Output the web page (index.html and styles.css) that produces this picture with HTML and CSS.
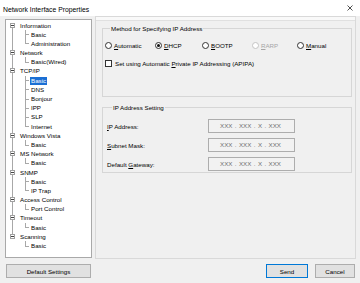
FILE: index.html
```html
<!DOCTYPE html>
<html lang="en">
<head>
    <meta charset="UTF-8">
    <title>Network Interface Properties</title>
    <link rel="stylesheet" href="styles.css">
</head>
<body>
    <div class="titlebar">
        <span class="title">Network Interface Properties</span>
        <svg class="close" width="6" height="6" viewBox="0 0 6 6"><path d="M0.5 0.5L5.5 5.5M5.5 0.5L0.5 5.5" stroke="#222" stroke-width="0.8"/></svg>
    </div>

    <div class="main">
        <ul class="tree">
            <li class="node">
                <div class="row"><span class="exp"></span>Information</div>
                <ul class="kids"><li>Basic</li><li>Administration</li></ul>
            </li>
            <li class="node">
                <div class="row"><span class="exp"></span>Network</div>
                <ul class="kids"><li>Basic(Wired)</li></ul>
            </li>
            <li class="node">
                <div class="row"><span class="exp"></span>TCP/IP</div>
                <ul class="kids">
                    <li class="sel"><span>Basic</span></li>
                    <li>DNS</li>
                    <li>Bonjour</li>
                    <li>IPP</li>
                    <li>SLP</li>
                    <li>Internet</li>
                </ul>
            </li>
            <li class="node">
                <div class="row"><span class="exp"></span>Windows Vista</div>
                <ul class="kids"><li>Basic</li></ul>
            </li>
            <li class="node">
                <div class="row"><span class="exp"></span>MS Network</div>
                <ul class="kids"><li>Basic</li></ul>
            </li>
            <li class="node">
                <div class="row"><span class="exp"></span>SNMP</div>
                <ul class="kids"><li>Basic</li><li>IP Trap</li></ul>
            </li>
            <li class="node">
                <div class="row"><span class="exp"></span>Access Control</div>
                <ul class="kids"><li>Port Control</li></ul>
            </li>
            <li class="node">
                <div class="row"><span class="exp"></span>Timeout</div>
                <ul class="kids"><li>Basic</li></ul>
            </li>
            <li class="node">
                <div class="row"><span class="exp"></span>Scanning</div>
                <ul class="kids"><li>Basic</li></ul>
            </li>
        </ul>

        <div class="panel">
            <fieldset class="group method">
                <legend>Method for Specifying IP Address</legend>
                <div class="radios">
                    <label class="opt"><span class="radio"></span><u>A</u>utomatic</label>
                    <label class="opt"><span class="radio on"></span><u>D</u>HCP</label>
                    <label class="opt"><span class="radio"></span><u>B</u>OOTP</label>
                    <label class="opt off"><span class="radio"></span><u>R</u>ARP</label>
                    <label class="opt"><span class="radio"></span><u>M</u>anual</label>
                </div>
                <label class="check"><span class="box"></span>Set using Automatic&nbsp;<u>P</u>rivate IP Addressing (APIPA)</label>
            </fieldset>

            <fieldset class="group ipset">
                <legend>IP Address Setting</legend>
                <div class="fields">
                    <span class="flabel"><u>I</u>P Address:</span>
                    <span class="ipbox">XXX . XXX . X . XXX</span>
                    <span class="flabel"><u>S</u>ubnet Mask:</span>
                    <span class="ipbox">XXX . XXX . X . XXX</span>
                    <span class="flabel">Default <u>G</u>ateway:</span>
                    <span class="ipbox">XXX . XXX . X . XXX</span>
                </div>
            </fieldset>
        </div>
    </div>

    <div class="footer">
        <button class="btn wide">Default Settings</button>
        <div class="actions">
            <button class="btn primary">Send</button>
            <button class="btn">Cancel</button>
        </div>
    </div>
</body>
</html>
```

FILE: styles.css
```css
body {
    margin: 0;
    width: 360px;
    height: 283px;
    overflow: hidden;
    background: #f0f0f0;
    font-family: "Liberation Sans", Arial, sans-serif;
    font-size: 6.2px;
    color: #000;
}

.titlebar {
    height: 16px;
    box-sizing: border-box;
    padding: 0 7px 0 3px;
    background: #fff;
    display: flex;
    align-items: center;
    justify-content: space-between;
}

.title {
    font-size: 6.8px;
    margin-top: 2px;
}

.close {
    margin-top: -1px;
}

.main {
    display: flex;
    align-items: flex-start;
    gap: 3px;
    padding-left: 5px;
    height: 243px;
}

/* tree view */
.tree {
    margin: 3px 0 0;
    padding: 0.5px 0 0;
    list-style: none;
    width: 87px;
    height: 239px;
    box-sizing: border-box;
    border: 1px solid #a9a9a9;
    background: #fff;
}

.node {
    position: relative;
}

.node::before {
    content: "";
    position: absolute;
    left: 6px;
    top: 0;
    bottom: 0;
    border-left: 1px solid #a8a8a8;
}

.node:first-child::before {
    top: 4.6px;
}

.node:last-child::before {
    bottom: auto;
    height: 4.6px;
}

.row {
    position: relative;
    height: 9.2px;
    line-height: 9.2px;
    padding-left: 14px;
    white-space: nowrap;
}

.exp {
    position: absolute;
    left: 4px;
    top: 2px;
    width: 5px;
    height: 5px;
    box-sizing: border-box;
    border: 1px solid #a0a0a0;
    background: #fff;
}

.exp::after {
    content: "";
    position: absolute;
    left: 0;
    top: 1px;
    width: 3px;
    height: 1px;
    background: #444;
}

.kids {
    list-style: none;
    margin: 0;
    padding: 0;
}

.kids li {
    position: relative;
    height: 9.2px;
    line-height: 9.2px;
    padding-left: 25px;
    white-space: nowrap;
}

.kids li::before {
    content: "";
    position: absolute;
    left: 19px;
    top: 0;
    bottom: 0;
    border-left: 1px solid #a8a8a8;
}

.kids li:last-child::before {
    bottom: auto;
    height: 4.6px;
}

.kids li::after {
    content: "";
    position: absolute;
    left: 19px;
    top: 4.6px;
    width: 4px;
    border-top: 1px solid #a8a8a8;
}

.kids li.sel span {
    display: inline-block;
    line-height: 8px;
    padding: 0 1px;
    margin-left: -1px;
    background: #1b6fd4;
    color: #fff;
}

/* right panel */
.panel {
    width: 261px;
    height: 243px;
    box-sizing: border-box;
    border: 1px solid #d9d9d9;
    padding: 8px 3px 0 6px;
    box-shadow: inset 0 3px 0 #f9f9f9, inset 0 4px 0 #e0e0e0;
}

.group {
    margin: 0;
    min-width: 0;
    border: 1px solid #d6d6d6;
}

.group legend {
    margin-left: 5px;
    padding: 0 1px;
    line-height: 7px;
}

.method {
    padding: 8px 2px 28px;
}

.radios {
    display: grid;
    grid-template-columns: 50px 47px 50px 45px auto;
    align-items: center;
    height: 10px;
}

.opt,
.check {
    display: flex;
    align-items: center;
}

.radio {
    width: 7px;
    height: 7px;
    box-sizing: border-box;
    border: 1px solid #333;
    border-radius: 50%;
    background: #fff;
    margin-right: 2px;
    display: flex;
    align-items: center;
    justify-content: center;
}

.radio.on::after {
    content: "";
    width: 3px;
    height: 3px;
    border-radius: 50%;
    background: #111;
}

.opt.off {
    color: #a6a6a6;
}

.opt.off .radio {
    border-color: #c4c4c4;
}

.check {
    height: 10px;
    margin-top: 8px;
}

.box {
    width: 7px;
    height: 7px;
    box-sizing: border-box;
    border: 1px solid #333;
    background: #fff;
    margin-right: 3px;
}

.ipset {
    margin-top: 7px;
    padding: 8px 2px 1px 4px;
}

.fields {
    display: grid;
    grid-template-columns: 101px 87px;
    grid-auto-rows: 14px;
    row-gap: 5px;
    align-items: center;
}

.ipbox {
    height: 14px;
    box-sizing: border-box;
    border: 1px solid #adadad;
    background: #f2f2f2;
    color: #707070;
    padding-left: 11px;
    line-height: 12px;
    word-spacing: 0.7px;
    white-space: nowrap;
}

/* bottom buttons */
.footer {
    display: flex;
    justify-content: space-between;
    padding: 5px 5px 0 6px;
}

.actions {
    display: flex;
    gap: 7px;
}

.btn {
    height: 14px;
    width: 40px;
    padding: 0;
    font-family: inherit;
    font-size: 6.2px;
    color: #000;
    background: #e1e1e1;
    border: 1px solid #adadad;
}

.btn.wide {
    width: 85px;
}

.btn.primary {
    width: 42px;
    border-color: #0078d7;
}
```
